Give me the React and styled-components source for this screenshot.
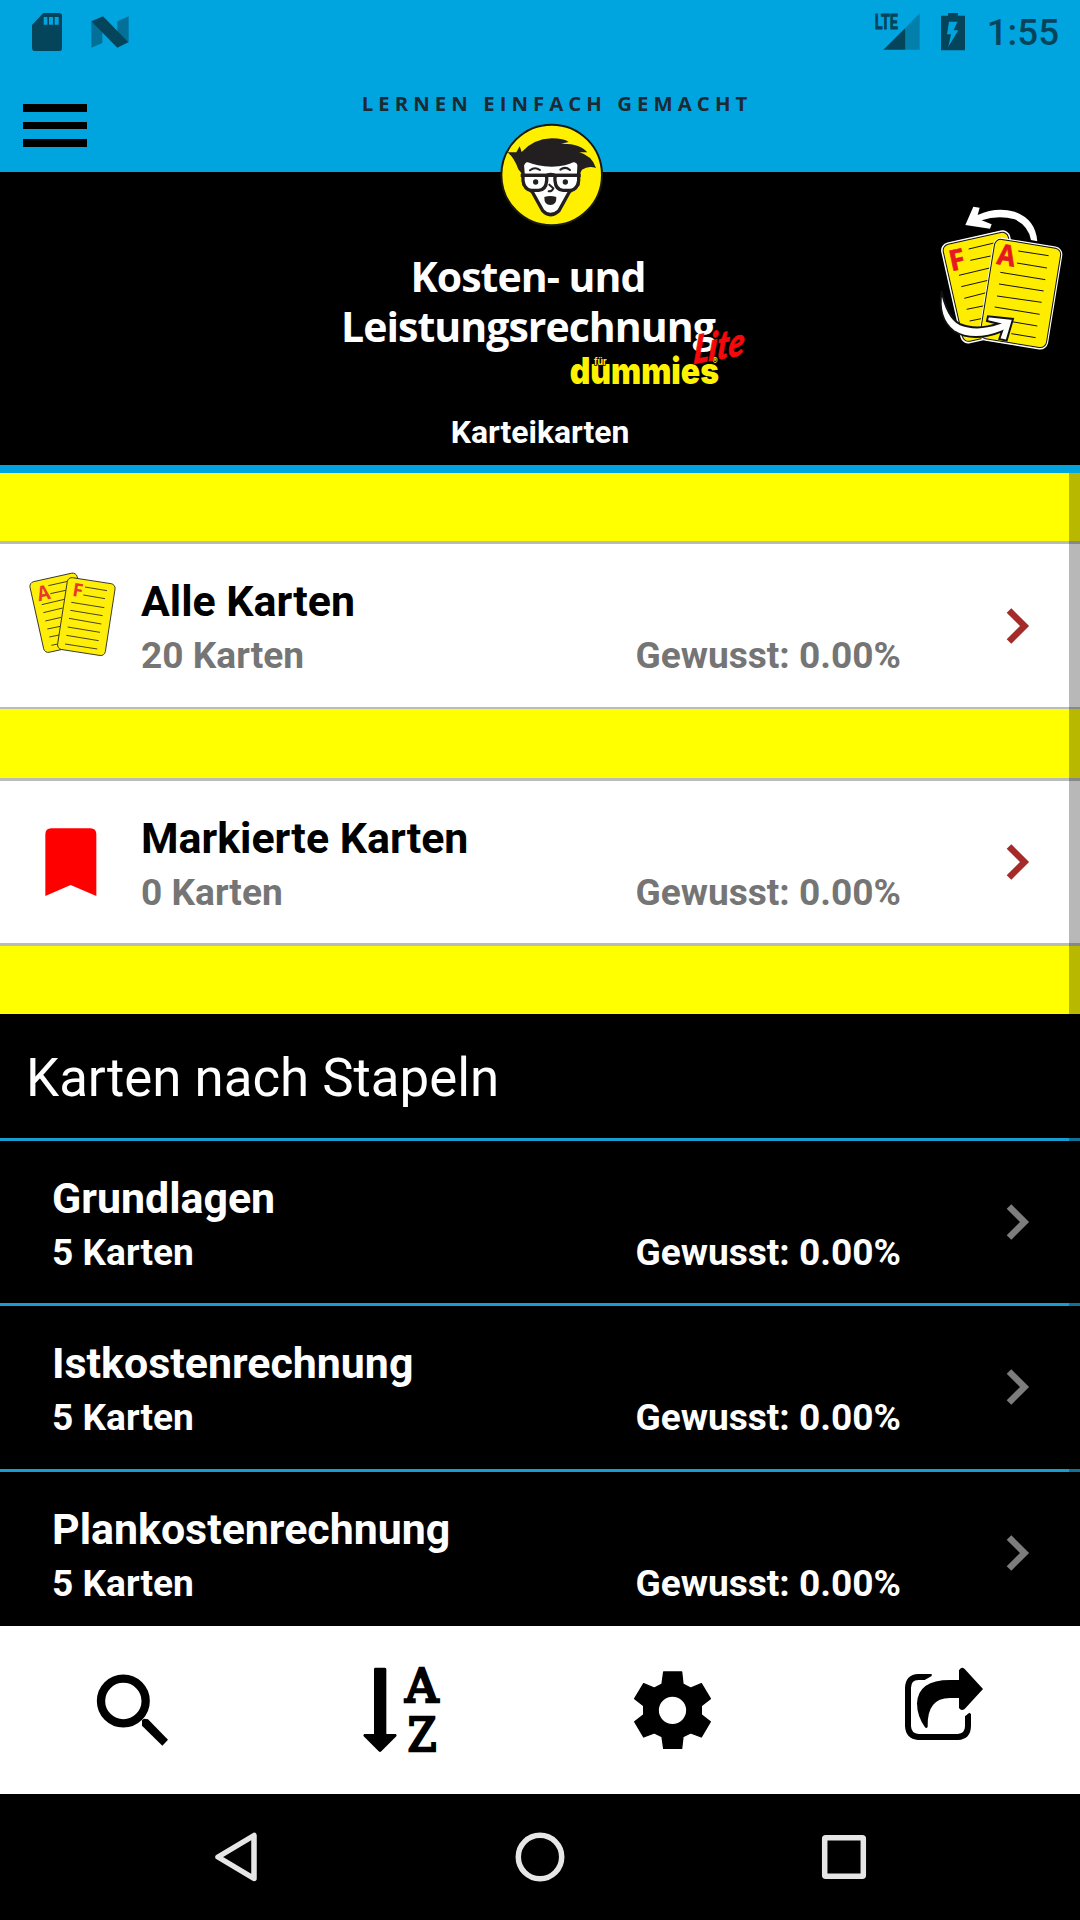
import styled, { createGlobalStyle } from 'styled-components';

const topStacks = [
    { id: 1, title: "Alle Karten", count: "20 Karten", known: "0.00%", icon: <SmallCards/> },
    { id: 2, title: "Markierte Karten", count: "0 Karten", known: "0.00%", icon: <Bookmark/> },
]

const stacks = [
    { id: 3, title: "Grundlagen", count: "5 Karten", known: "0.00%" },
    { id: 4, title: "Istkostenrechnung", count: "5 Karten", known: "0.00%" },
    { id: 5, title: "Plankostenrechnung", count: "5 Karten", known: "0.00%" },
]

export default function App(){
    return(
        <Screen>
            <GlobalStyle/>
            <StatusBar/>
            <AppBar>
                <MenuButton>
                    <span/>
                    <span/>
                    <span/>
                </MenuButton>
                <Mascot/>
            </AppBar>

            <Header>
                <Title>
                    <span>Kosten- und</span>
                    <span>Leistungsrechnung</span>
                    <Brand/>
                </Title>
                <Subtitle>Karteikarten</Subtitle>
                <FlipCards/>
            </Header>

            <List>
                <Gap/>
                <StackRow stack={topStacks[0]} height={168} bottom={2}/>
                <Gap $height={69}/>
                <StackRow stack={topStacks[1]} height={168} bottom={3}/>
                <Gap/>
                <SectionTitle>Karten nach Stapeln</SectionTitle>
                {stacks.map((s) => <StackRow key={s.id} stack={s} height={165.33} dark/>)}
                <ScrollThumb/>
            </List>

            <Toolbar>
                <SearchIcon/>
                <SortIcon/>
                <GearIcon/>
                <ShareIcon/>
            </Toolbar>

            <NavBar>
                <svg width="60" height="60" viewBox="0 0 60 60"><path d="M12 30 L48 8.500 V51.500 Z"/></svg>
                <svg width="60" height="60" viewBox="0 0 60 60"><circle cx="30" cy="30" r="21.700"/></svg>
                <svg width="60" height="60" viewBox="0 0 60 60"><rect x="10.700" y="10.700" width="38.600" height="38.600" rx="1"/></svg>
            </NavBar>
        </Screen>
    )
}

function StackRow({stack, dark, height, bottom}){
    return(
        <Row $dark={dark} $height={height} $bottom={bottom}>
            {stack.icon && <IconSlot>{stack.icon}</IconSlot>}
            <RowText>
                <h2>{stack.title}</h2>
                <RowInfo $dark={dark}>
                    <span>{stack.count}</span>
                    <span>Gewusst: {stack.known}</span>
                </RowInfo>
            </RowText>
            <Chevron $dark={dark} viewBox="0 0 24 38">
                <path d="M3 3.500 L18.500 19 L3 34.500"/>
            </Chevron>
        </Row>
    )
}

function StatusBar(){
    return(
        <Status>
            <svg width="30" height="38" viewBox="97 37 90 114">
                <path fillRule="evenodd" d="M131 37 H178 Q188 37 188 47 V141 Q188 151 178 151 H107 Q97 151 97 141 V73 Z M132 49 V72 H143 V49 Z M148 49 V72 H160 V49 Z M165 49 V72 H177 V49 Z"/>
            </svg>
            <svg width="38" height="32" viewBox="275 46 114 96">
                <path opacity=".55" d="M276 62 L309 90 V127 L276 141 Z M354 62 L388 47 V126 L354 98 Z"/>
                <path d="M276 62 L311 47 L387 125 L354 141 Z"/>
            </svg>
            <Spacer/>
            <Signal width="46" height="38" viewBox="467 37 138 114">
                <path opacity=".4" d="M604 38 V147 H561 V82 Z"/>
                <path d="M561 82 V147 H495 Z"/>
                <text x="469" y="86" fontFamily="Roboto, sans-serif" fontWeight="700" fontSize="62" textLength="70" lengthAdjust="spacingAndGlyphs" stroke="#04455c" strokeWidth="2.500">LTE</text>
            </Signal>
            <Battery width="24" height="38" viewBox="669 37 72 114">
                <path fillRule="evenodd" d="M690 37 H720 V45 H741 V149 H669 V45 H690 Z M693 63 L687 101 H699 L691 138 L721 89 H707 L718 63 Z"/>
            </Battery>
            <Clock>1:55</Clock>
        </Status>
    )
}

function Mascot(){
    return(
        <MascotArt viewBox="60 40 1170 400">
            <text x="65" y="91" fontSize="61" fontWeight="700" fill="#1b2a33" fontFamily="'Open Sans', sans-serif" textLength="1157">LERNEN EINFACH GEMACHT</text>
            <circle cx="635" cy="283" r="151" fill="#fff000" stroke="#171a10" strokeWidth="6"/>
            <path d="M546 240 L552 312 L577 334 L608 390 Q630 414 657 390 L688 334 L714 312 L718 240 Z" fill="#fff" stroke="#231f20" strokeWidth="10" strokeLinejoin="round"/>
            <path d="M502 215 L529 215 L539 197 L545 214 Q580 175 635 173 Q672 173 686 184 L663 189 Q722 188 742 215 L718 215 Q756 225 768 262 Q745 254 726 267 L719 280 Q718 248 702 243 Q680 256 635 258 Q590 256 561 243 Q547 252 548 282 L535 266 Q522 230 502 215 Z" fill="#231f20"/>
            <g fill="none" stroke="#231f20" strokeWidth="6" strokeLinecap="round">
                <path d="M570 269 Q584 257 600 268"/>
                <path d="M661 267 Q676 256 690 268"/>
                <path d="M628 312 L640 323 Q636 333 626 332"/>
            </g>
            <g fill="#fff" stroke="#231f20" strokeWidth="10">
                <path d="M549 284 H614 Q622 284 620 300 Q618 328 596 329 H573 Q553 326 549 300 Z"/>
                <path d="M716 284 H651 Q643 284 645 300 Q647 328 669 329 H692 Q712 326 716 300 Z"/>
                <path d="M614 286 Q632 276 651 286" fill="none"/>
                <path d="M542 284 H722" fill="none"/>
            </g>
            <g fill="#231f20">
                <circle cx="587" cy="304" r="8"/>
                <circle cx="676" cy="304" r="8"/>
                <path d="M613 349 Q631 343 649 349 Q650 373 631 373 Q612 373 613 349 Z"/>
            </g>
        </MascotArt>
    )
}

function Brand(){
    return(
        <BrandArt viewBox="740 255 550 190">
            <g fill="#fff200">
                <text x="748" y="430" fontFamily="Inter, sans-serif" fontSize="109" fontWeight="900" textLength="448" lengthAdjust="spacingAndGlyphs">dummies</text>
                <text x="821" y="372" fontFamily="Inter, sans-serif" fontSize="28" textLength="38" lengthAdjust="spacingAndGlyphs" stroke="#000" strokeWidth="5" paintOrder="stroke">für</text>
                <text x="1176" y="370" fontFamily="Inter, sans-serif" fontSize="25">®</text>
            </g>
            <text transform="translate(1117 369) rotate(-10) skewX(-15)" fontFamily="Lato, sans-serif" fontStyle="italic" fontSize="116" fontWeight="900" fill="#f5090b" stroke="#f5090b" strokeWidth="2" textLength="155" lengthAdjust="spacingAndGlyphs">Lite</text>
        </BrandArt>
    )
}

function FlipCards(){
    return(
        <FlipArt viewBox="40 40 400 450">
            <g transform="translate(62 165) rotate(-12.700)">
                <rect width="208" height="306" rx="22" fill="#fff" stroke="#fff" strokeWidth="4"/>
                <rect x="4" y="4" width="200" height="298" rx="19" fill="#ffed00" stroke="#111" strokeWidth="3"/>
            </g>
            <path d="M147 178 L223 160 M152 212 L213 199 M118 257 L210 235 M125 291 L205 272 M134 326 L200 309 M141 359 L195 348 M150 394 L190 386" stroke="#111" strokeWidth="3"/>
            <g transform="translate(226 143) rotate(9.200)">
                <rect width="206" height="309" rx="22" fill="#fff" stroke="#fff" strokeWidth="4"/>
                <rect x="2" y="3" width="201" height="302" rx="19" fill="#ffed00" stroke="#111" strokeWidth="3"/>
            </g>
            <path d="M296 184 L387 198 M292 220 L382 235 M242 248 L377 270 M238 283 L372 304 M232 319 L366 338 M225 352 L360 374 M270 395 L353 409 M275 432 L348 444" stroke="#111" strokeWidth="3"/>
            <g fill="#e5191f" stroke="#e5191f" strokeWidth="2" fontFamily="'Open Sans', sans-serif" fontWeight="700" fontSize="86">
                <text transform="translate(95 245) rotate(-12)">F</text>
                <text transform="translate(229 222) rotate(9)" textLength="54" lengthAdjust="spacingAndGlyphs">A</text>
            </g>
            <path d="M137 106 L161 51 L180 54 L174 76 Q230 50 285 66 Q348 88 353 155 L334 151 Q326 108 285 89 Q235 75 186 92 L216 104 L211 117 Z" fill="#fff"/>
            <path d="M66 304 Q82 382 120 403 Q170 424 236 402 L202 394 L205 380 L280 388 L261 453 L239 448 L247 425 Q160 460 102 424 Q52 385 66 304 Z" fill="#fff" stroke="#111" strokeWidth="6"/>
        </FlipArt>
    )
}

function SmallCards(){
    return(
        <svg width="90" height="88" viewBox="80 120 270 264">
            <g fill="#ffee0a" stroke="#222" strokeWidth="2.500">
                <rect width="145" height="217" rx="14" transform="translate(86 158) rotate(-12.500)"/>
                <path d="M144 167 L202 154 M150 191 L196 181 M124 224 L192 208 M129 248 L187 234 M135 273 L183 262 M141 297 L180 289 M147 321 L176 315 M153 346 L172 342"/>
                <rect width="145" height="218" rx="14" transform="translate(203 141) rotate(8.800)"/>
                <path d="M254 171 L320 182 M249 195 L314 206 M213 217 L312 233 M210 241 L307 257 M206 265 L303 282 M202 291 L299 307 M198 316 L295 332 M194 342 L291 357"/>
            </g>
            <g fill="#e83a2c" fontFamily="'Open Sans', sans-serif" fontWeight="700" fontSize="61">
                <text transform="translate(115 214) rotate(-12)" textLength="38" lengthAdjust="spacingAndGlyphs">A</text>
                <text transform="translate(214 197) rotate(9)" textLength="31" lengthAdjust="spacingAndGlyphs" fontSize="55">F</text>
            </g>
        </svg>
    )
}

function Bookmark(){
    return(
        <svg width="90" height="94" viewBox="80 131 270 282">
            <path fill="#f00" d="M135 410 V225 Q135 207 153 207 H270 Q288 207 288 225 V410 L211 377 Z"/>
        </svg>
    )
}

function SearchIcon(){
    return(
        <ToolIcon viewBox="90 135 270 270">
            <circle cx="190" cy="243" r="67" fill="none" stroke="#000" strokeWidth="25"/>
            <path d="M246 301 L252 296 L264 298 L324 359 L307 377 L246 317 Z"/>
        </ToolIcon>
    )
}

function SortIcon(){
    return(
        <ToolIcon viewBox="900 135 270 270">
            <path d="M945 143 H975 Q979 143 979 148 V342 H1007 Q1012 344 1009 349 L964 394 Q960 398 956 394 L911 349 Q908 344 913 342 H942 V148 Q942 143 945 143 Z"/>
            <g fontFamily="'DejaVu Serif', serif" fontWeight="400" fontSize="138" stroke="#000" strokeWidth="8">
                <text x="1036" y="247" textLength="99" lengthAdjust="spacingAndGlyphs">A</text>
                <text x="1043" y="392" textLength="86" lengthAdjust="spacingAndGlyphs">Z</text>
            </g>
        </ToolIcon>
    )
}

function GearIcon(){
    return(
        <ToolIcon viewBox="90 135 270 270">
            <path fillRule="evenodd" stroke="#000" strokeWidth="4" strokeLinejoin="round" d="M191 156 H245 L249 192 L272 204 L304 191 L331 236 L304 257 V284 L331 305 L304 351 L272 339 L249 350 L245 385 H191 L186 350 L163 339 L131 351 L104 305 L131 284 V257 L104 236 L131 191 L163 204 L186 192 Z M217.500 228 A43 43 0 1 0 217.500 314 A43 43 0 1 0 217.500 228 Z"/>
        </ToolIcon>
    )
}

function ShareIcon(){
    return(
        <ToolIcon viewBox="900 135 270 270">
            <path d="M995 162 V168 L974 180 H955 Q933 181 933 203 V319 Q934 341 956 342 H1073 Q1095 341 1095 319 V289 L1108 278 L1113 282 V318 Q1112 358 1074 360 H954 Q917 357 915 318 V204 Q916 164 955 162 Z"/>
            <path d="M1077 151 Q1084 138 1094 147 L1149 207 L1094 267 Q1084 275 1077 264 V234 H1050 Q980 234 983 321 Q979 326 975 322 Q951 288 951 250 Q954 180 1050 180 H1077 Z"/>
        </ToolIcon>
    )
}

const GlobalStyle = createGlobalStyle`
body{
    margin: 0;
    background: #000;
    font-family: Roboto, sans-serif;
}
*{
    box-sizing: border-box;
}
h1, h2, p{
    margin: 0;
}
svg{
    display: block;
    flex-shrink: 0;
}
`

const Screen = styled.div`
display: flex;
flex-direction: column;
width: 1080px;
height: 1920px;
overflow: hidden;
background: #000;
`

const Status = styled.div`
display: flex;
align-items: center;
height: 63px;
padding: 0 21px 0 32px;
gap: 29px;
background: #00a5e0;
color: #04455c;
fill: #04455c;
`
const Spacer = styled.div`
flex: 1;
`
const Signal = styled.svg`
margin-right: -1px;
overflow: visible;
`
const Battery = styled.svg`
margin-left: -7px;
`
const Clock = styled.span`
margin-left: -7px;
font-size: 36.700px;
font-weight: 500;
line-height: 63px;
padding-top: 2px;
`

const AppBar = styled.div`
position: relative;
display: flex;
align-items: center;
height: 109px;
padding: 16px 23px 0;
background: #00a5e0;
`
const MenuButton = styled.div`
display: flex;
flex-direction: column;
gap: 10px;
width: 64px;
span{
    height: 7.500px;
    background: #000;
}
`
/* hangs over the edge between the blue bar and the header */
const MascotArt = styled.svg`
position: absolute;
z-index: 1;
top: 30.800px;
left: 360px;
width: 390px;
height: 133.300px;
overflow: visible;
`

const Header = styled.div`
position: relative;
display: flex;
flex-direction: column;
align-items: center;
height: 301px;
padding-top: 78.500px;
border-bottom: 8px solid #00a5e0;
color: #fff;
`
const Title = styled.h1`
position: relative;
display: flex;
flex-direction: column;
align-items: center;
width: 424px;
padding-right: 24px;
font-family: 'Open Sans', sans-serif;
font-size: 41px;
font-weight: 700;
letter-spacing: -.970px;
line-height: 50px;
white-space: nowrap;
`
const BrandArt = styled.svg`
position: absolute;
top: 75.500px;
left: 238.700px;
width: 183.300px;
height: 63.300px;
overflow: visible;
letter-spacing: 0;
`
const Subtitle = styled.p`
margin-top: 62.500px;
font-size: 31.900px;
font-weight: 700;
line-height: 38px;
`
const FlipArt = styled.svg`
position: absolute;
top: 31.300px;
left: 933.300px;
width: 133.300px;
height: 150px;
`

const List = styled.div`
position: relative;
height: 1153px;
overflow: hidden;
`
const Gap = styled.div`
height: ${({$height}) => $height || 68}px;
background: #ff0;
`
const Row = styled.div`
display: flex;
align-items: center;
height: ${({$height}) => $height}px;
padding-left: ${({$dark}) => $dark ? 52 : 26.700}px;
padding-right: 50px;
border-top: 3px solid ${({$dark}) => $dark ? "#189dd0" : "#bbb"};
border-bottom: ${({$bottom}) => $bottom || 0}px solid #bbb;
background: ${({$dark}) => $dark ? "#000" : "#fff"};
color: ${({$dark}) => $dark ? "#fff" : "#000"};
`
const IconSlot = styled.div`
width: 114.300px;
padding-bottom: 24px;
`
const RowText = styled.div`
flex: 1;
align-self: flex-start;
padding-top: 32px;
h2{
    font-size: 42.900px;
    font-weight: 700;
    line-height: 50px;
}
`
const RowInfo = styled.div`
display: flex;
justify-content: space-between;
margin-top: 9px;
padding-right: 105px;
font-size: 37.100px;
font-weight: 700;
line-height: 42px;
color: ${({$dark}) => $dark ? "#fff" : "#757575"};
`
const Chevron = styled.svg`
width: 24px;
height: 38px;
fill: none;
stroke: ${({$dark}) => $dark ? "#7d7d7d" : "#a52a2a"};
stroke-width: 6.500px;
`
const SectionTitle = styled.h2`
height: 124px;
padding-left: 26px;
background: #000;
color: #fff;
font-size: 52.800px;
font-weight: 400;
line-height: 129px;
`
const ScrollThumb = styled.div`
position: absolute;
top: 0;
right: 0;
width: 11px;
height: 100%;
background: rgba(0, 0, 0, .28);
`

const Toolbar = styled.div`
display: grid;
grid-template-columns: repeat(4, 1fr);
place-items: center;
height: 168px;
background: #fff;
`
const ToolIcon = styled.svg`
width: 90px;
height: 90px;
`

const NavBar = styled.div`
display: flex;
align-items: center;
justify-content: center;
gap: 244px;
height: 126px;
background: #000;
svg{
    fill: none;
    stroke: #e6e6e6;
    stroke-width: 5.500px;
    stroke-linejoin: round;
}
`
